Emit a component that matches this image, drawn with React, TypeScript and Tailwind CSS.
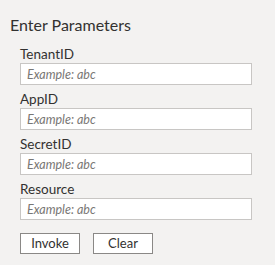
const fields = ["TenantID", "AppID", "SecretID", "Resource"];

export default function App() {
  return (
    <div className="w-[275px] h-[265px] bg-[#f3f2f1] text-[#323130] font-['Segoe_UI','Lato',sans-serif] overflow-hidden">
      <div className="pt-[14px] pl-[10px] text-[16px] leading-[22px]">Enter Parameters</div>
      <div className="pl-[20px] pr-[23px] pt-[9px]">
        {fields.map((name) => (
          <div key={name} className="mb-[5px]">
            <label className="block text-[13.5px] leading-[18px]">{name}</label>
            <input
              type="text"
              placeholder="Example: abc"
              className="block w-[232px] h-[22px] bg-white border border-[#c8c6c4] px-[6px] text-[12.5px] outline-none placeholder:italic placeholder:text-[#797775]"
            />
          </div>
        ))}
        <div className="flex gap-[13px] pt-[8px]">
          <button className="w-[60px] h-[21px] border border-[#8a8886] bg-white text-[13px] leading-[19px]">Invoke</button>
          <button className="w-[60px] h-[21px] border border-[#8a8886] bg-white text-[13px] leading-[19px]">Clear</button>
        </div>
      </div>
    </div>
  );
}
